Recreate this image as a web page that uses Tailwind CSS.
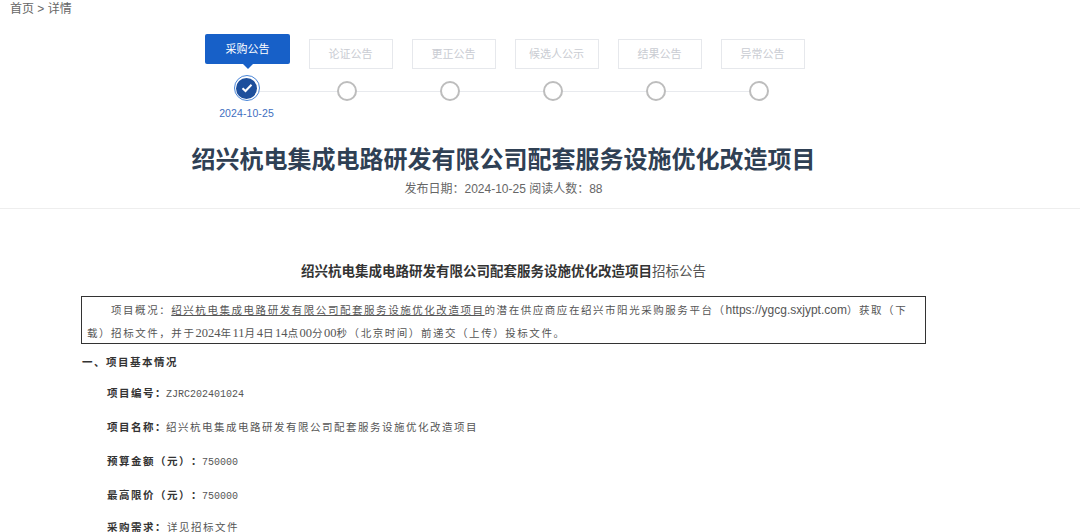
<!DOCTYPE html>
<html lang="zh-CN">
<head>
  <meta charset="UTF-8" />
  <title>详情</title>
  <script src="https://cdn.jsdelivr.net/npm/@tailwindcss/browser@4"></script>
</head>
<body class="bg-white h-[532px] overflow-hidden font-['Liberation_Sans','Noto_Sans_CJK_SC',sans-serif] text-[#666] [text-spacing-trim:space-all]">
  <!-- Breadcrumb -->
  <div class="mt-px pl-[10px] h-[16px] text-[12px] leading-[16px] text-[#666]">首页 &gt; 详情</div>

  <!-- Steps -->
  <div class="ml-[196px] mt-[17px] flex w-[618px]">
    <div class="w-[103px] flex flex-col items-center">
      <div class="relative w-[85px] h-[30px] bg-[#1760c8] rounded-[2px] text-white text-[11px] flex items-center justify-center">
        采购公告
        <span class="absolute left-[38px] top-[30px] border-x-[5px] border-t-[5px] border-x-transparent border-t-[#1760c8]"></span>
      </div>
      <div class="relative w-full h-[22px] mt-[16px] flex items-center justify-center">
        <span class="absolute left-[51px] right-0 top-[11px] h-px bg-[#e8eaee]"></span>
        <span class="relative right-px -top-[3px] w-[26px] h-[26px] rounded-full bg-white border border-[#4a86d8] flex items-center justify-center">
          <span class="w-[21px] h-[21px] rounded-full bg-[#1d4f9c] flex items-center justify-center">
            <svg width="12" height="10" viewBox="0 0 12 10" fill="none"><path d="M1.5 5.2 4.5 8 10.5 1.8" stroke="#fff" stroke-width="2"/></svg>
          </span>
        </span>
      </div>
      <div class="relative right-px mt-[4px] text-[10.5px] leading-[14px] tracking-[0.1px] text-[#3f6fbf]">2024-10-25</div>
    </div>
    <div class="w-[103px] flex flex-col items-center">
      <div class="mt-[5px] w-[84px] h-[30px] border border-[#e6e8ec] text-[#c9ccd2] text-[11px] flex items-center justify-center">论证公告</div>
      <div class="relative w-full h-[22px] mt-[11px] flex items-center justify-center">
        <span class="absolute left-0 right-0 top-[11px] h-px bg-[#e8eaee]"></span>
        <span class="relative right-[4px] w-[20px] h-[20px] rounded-full bg-white border-2 border-[#bdbdbd]"></span>
      </div>
    </div>
    <div class="w-[103px] flex flex-col items-center">
      <div class="mt-[5px] w-[84px] h-[30px] border border-[#e6e8ec] text-[#c9ccd2] text-[11px] flex items-center justify-center">更正公告</div>
      <div class="relative w-full h-[22px] mt-[11px] flex items-center justify-center">
        <span class="absolute left-0 right-0 top-[11px] h-px bg-[#e8eaee]"></span>
        <span class="relative right-[4px] w-[20px] h-[20px] rounded-full bg-white border-2 border-[#bdbdbd]"></span>
      </div>
    </div>
    <div class="w-[103px] flex flex-col items-center">
      <div class="mt-[5px] w-[84px] h-[30px] border border-[#e6e8ec] text-[#c9ccd2] text-[11px] flex items-center justify-center">候选人公示</div>
      <div class="relative w-full h-[22px] mt-[11px] flex items-center justify-center">
        <span class="absolute left-0 right-0 top-[11px] h-px bg-[#e8eaee]"></span>
        <span class="relative right-[4px] w-[20px] h-[20px] rounded-full bg-white border-2 border-[#bdbdbd]"></span>
      </div>
    </div>
    <div class="w-[103px] flex flex-col items-center">
      <div class="mt-[5px] w-[84px] h-[30px] border border-[#e6e8ec] text-[#c9ccd2] text-[11px] flex items-center justify-center">结果公告</div>
      <div class="relative w-full h-[22px] mt-[11px] flex items-center justify-center">
        <span class="absolute left-0 right-0 top-[11px] h-px bg-[#e8eaee]"></span>
        <span class="relative right-[4px] w-[20px] h-[20px] rounded-full bg-white border-2 border-[#bdbdbd]"></span>
      </div>
    </div>
    <div class="w-[103px] flex flex-col items-center">
      <div class="mt-[5px] w-[84px] h-[30px] border border-[#e6e8ec] text-[#c9ccd2] text-[11px] flex items-center justify-center">异常公告</div>
      <div class="relative w-full h-[22px] mt-[11px] flex items-center justify-center">
        <span class="absolute left-0 right-[55px] top-[11px] h-px bg-[#e8eaee]"></span>
        <span class="relative right-[4px] w-[20px] h-[20px] rounded-full bg-white border-2 border-[#bdbdbd]"></span>
      </div>
    </div>
  </div>

  <!-- Title -->
  <div class="w-[1007px] mt-[22px] text-center">
    <h1 class="text-[24px] leading-[36px] font-bold text-[#2f4054]">绍兴杭电集成电路研发有限公司配套服务设施优化改造项目</h1>
    <p class="mt-[2px] text-[12px] leading-[18px] text-[#666]">发布日期：2024-10-25 阅读人数：88</p>
  </div>
  <div class="mt-[10px] h-px bg-[#eeeeee]"></div>

  <!-- Article -->
  <div class="ml-[81px] w-[845px] font-['Liberation_Serif','Noto_Sans_CJK_SC',serif] text-[#555]">
    <h2 class="mt-[53px] w-[845px] text-center font-['Liberation_Sans','Noto_Sans_CJK_SC',sans-serif] text-[13.5px] leading-[20px] font-bold text-[#333]">绍兴杭电集成电路研发有限公司配套服务设施优化改造项目<span class="font-normal text-[#555]">招标公告</span></h2>
    <div class="mt-[14px] h-[48px] border border-[#333] pl-[5px] py-[2px] text-[10.5px] leading-[22px] tracking-[1.55px]">
      <p class="indent-[24px]">项目概况：<span class="underline">绍兴杭电集成电路研发有限公司配套服务设施优化改造项目</span>的潜在供应商应在绍兴市阳光采购服务平台（<span class="font-['Liberation_Sans'] text-[12px] tracking-normal">https://ygcg.sxjypt.com</span>）获取（下<br />载）招标文件，并于<span class="text-[12.5px] tracking-normal">2024</span>年<span class="text-[12.5px] tracking-normal">11</span>月<span class="text-[12.5px] tracking-normal">4</span>日<span class="text-[12.5px] tracking-normal">14</span>点<span class="text-[12.5px] tracking-normal">00</span>分<span class="text-[12.5px] tracking-normal">00</span>秒（北京时间）前递交（上传）投标文件。</p>
    </div>
    <div class="mt-[8px] pl-px text-[10.5px] leading-[22px] tracking-[1.5px]">
      <p class="h-[22px] font-semibold text-[#333]">一、项目基本情况</p>
      <p class="h-[22px] mt-[9px] pl-[25px]"><span class="font-semibold text-[#333]">项目编号：</span><span class="-ml-px font-['Liberation_Mono'] text-[10px] leading-none tracking-normal">ZJRC202401024</span></p>
      <p class="h-[22px] mt-[12px] pl-[25px]"><span class="font-semibold text-[#333]">项目名称：</span><span class="-ml-px">绍兴杭电集成电路研发有限公司配套服务设施优化改造项目</span></p>
      <p class="h-[22px] mt-[12px] pl-[25px]"><span class="font-semibold text-[#333]">预算金额（元）：</span><span class="-ml-px font-['Liberation_Mono'] text-[10px] leading-none tracking-normal">750000</span></p>
      <p class="h-[22px] mt-[12px] pl-[25px]"><span class="font-semibold text-[#333]">最高限价（元）：</span><span class="-ml-px font-['Liberation_Mono'] text-[10px] leading-none tracking-normal">750000</span></p>
      <p class="h-[22px] mt-[10px] pl-[25px]"><span class="font-semibold text-[#333]">采购需求：</span>详见招标文件</p>
    </div>
  </div>
</body>
</html>
